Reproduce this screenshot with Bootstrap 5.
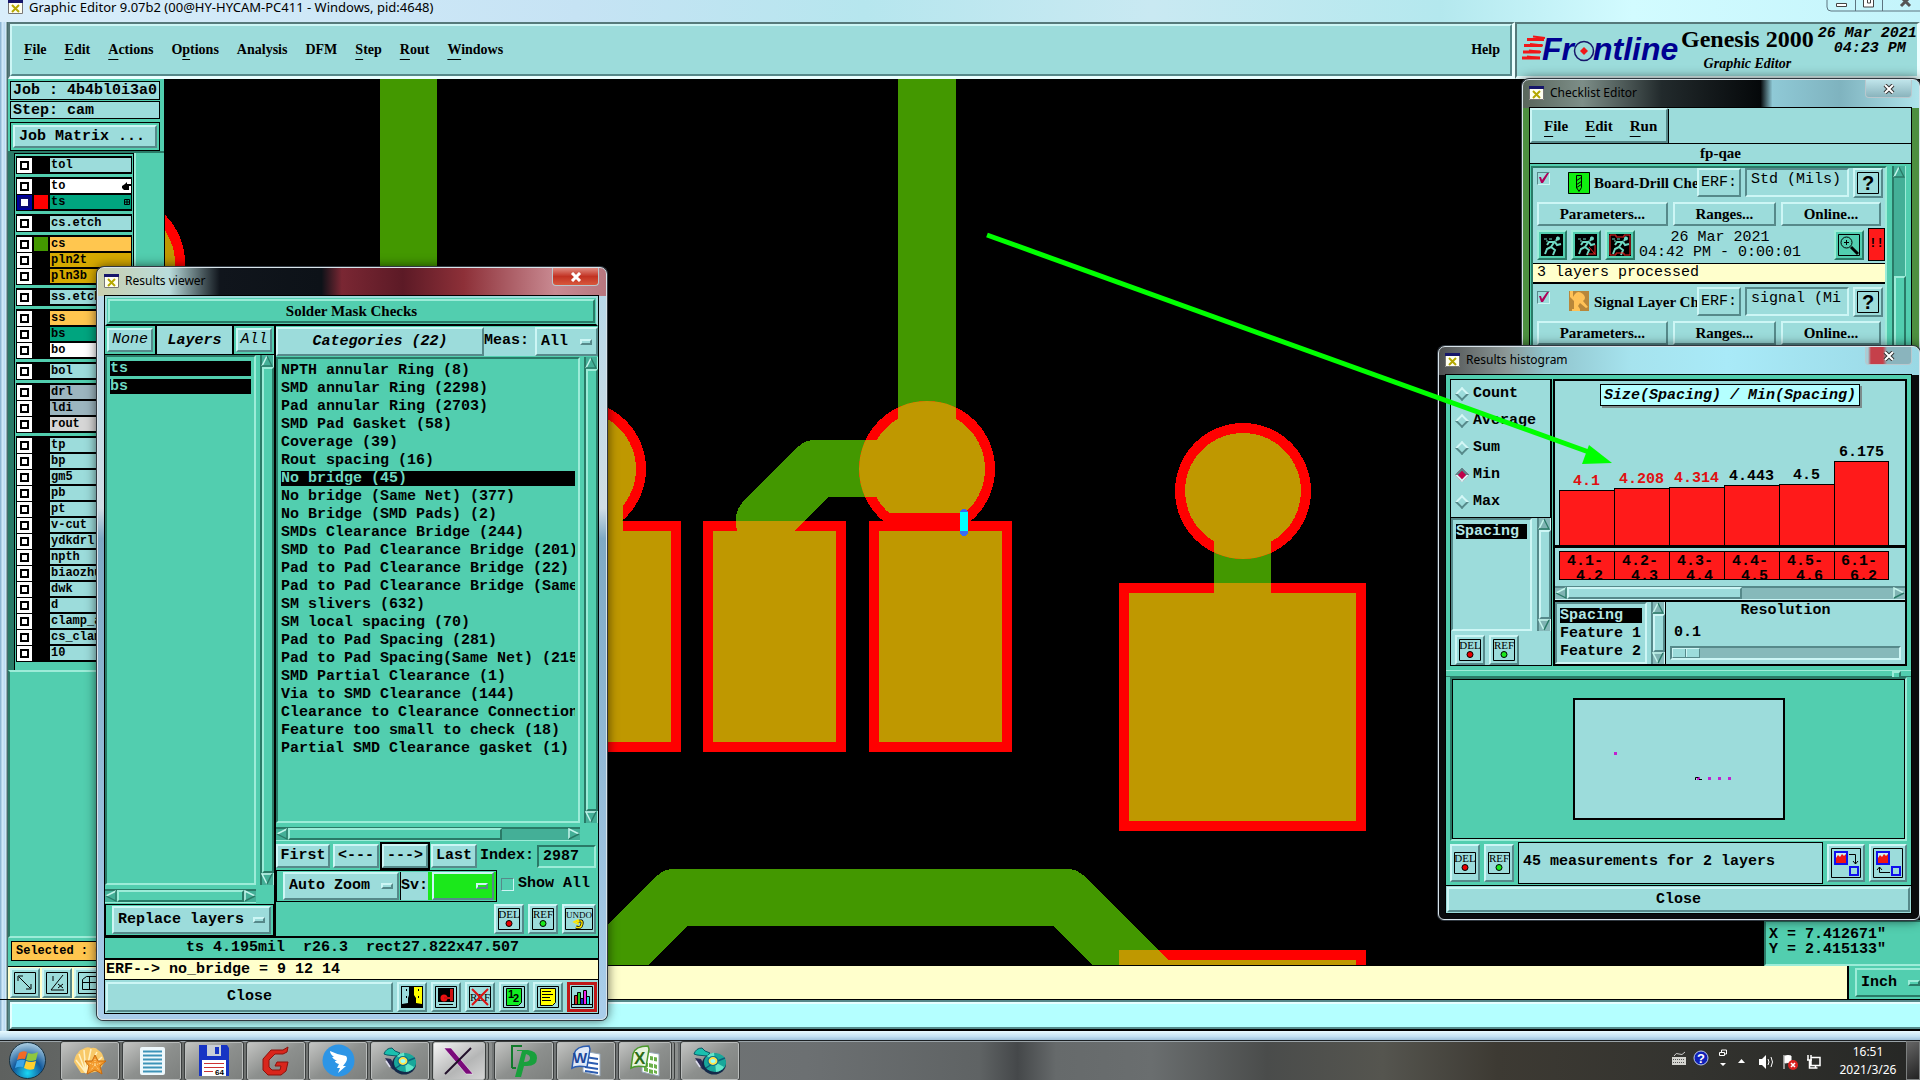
<!DOCTYPE html>
<html lang="en">
<head>
<meta charset="utf-8">
<meta name="viewport" content="width=device-width, initial-scale=1">
<title>Graphic Editor 9.07b2</title>
<link href="https://cdn.jsdelivr.net/npm/bootstrap@5.3.0/dist/css/bootstrap.min.css" rel="stylesheet">
<style>
:root{--cy:#9cdcdb;--cyl:#cdf6f5;--cyd:#56898a;--gr:#52ceaf;--grl:#9cecd8;--grd:#2a7a67;--cream:#ffffcc}
body{font-family:"Liberation Mono",monospace;font-weight:700;font-size:15px;line-height:18px;color:#000;height:100vh;overflow:hidden;background:#000}
button,select,input{font:inherit;color:inherit;border-radius:0}
button{padding:0;white-space:nowrap}
ul{list-style:none;margin:0;padding:0}
svg{display:block;flex:none}
.thin{font-weight:400}
.serif{font-family:"Liberation Serif",serif}
.ui{font-family:"Noto Sans",sans-serif;font-weight:400;font-size:12px}
.ui-lg{font-size:13px;line-height:15px}
.cy{background:var(--cy)} .gr{background:var(--gr)} .cream{background:var(--cream)}
.up{border:2px solid;border-color:var(--cyl) var(--cyd) var(--cyd) var(--cyl);background:var(--cy)}
.dn{border:2px solid;border-color:var(--cyd) var(--cyl) var(--cyl) var(--cyd);background:var(--cy)}
.gup{border:2px solid;border-color:var(--grl) var(--grd) var(--grd) var(--grl);background:var(--gr)}
.gdn{border:2px solid;border-color:var(--grd) var(--grl) var(--grl) var(--grd);background:var(--gr)}
.ln{border:1px solid #000}
.clip{overflow:hidden;white-space:nowrap;min-width:0}
.minh{min-height:0}
.gap-x{gap:5px}

/* option menus */
.drop select{appearance:none;border:0;background:transparent;padding:0;flex:1 1 0;min-width:0;outline:0}
.drop i{width:12px;height:6px;border:2px solid;border-color:var(--cyl) var(--cyd) var(--cyd) var(--cyl);flex:none}

/* scroll bars */
.vbar{width:14px;display:flex;flex-direction:column;flex:none;background:#86b9ba;box-shadow:inset 2px 0 var(--cyd),inset -1px 0 var(--cyl)}
.vbar b{flex:1;margin-left:2px;border:2px solid;border-color:var(--cyl) var(--cyd) var(--cyd) var(--cyl);background:var(--cy)}
.vbar b.late{margin-top:98px}
.hbar{height:14px;display:flex;align-items:center;flex:none;background:#86b9ba;box-shadow:inset 0 2px var(--cyd),inset 0 -1px var(--cyl)}
.hbar b{height:12px;border:2px solid;border-color:var(--cyl) var(--cyd) var(--cyd) var(--cyl);background:var(--cy)}
.hbar .part{width:214px}
.gbar{background:#44af97;--cyl:var(--grl);--cyd:var(--grd);--cy:var(--gr)}
.hbar.gbar{margin:4px 18px 1px 0}
.vbar svg,.hbar svg{color:#7fb3b3}.gbar svg{color:#44af97}

/* main shell */
.topline{height:22px;background:linear-gradient(90deg,#d9eefb,#c6e3f4 30%,#b6e6ee 45%,#c9e9f2 60%,#b4e8ee 75%,#d2fbff 85%,#c4f4fb);padding-left:8px;gap:6px}
.menus{height:57px}
.menus .bar{border:solid;border-width:2px 3px 3px 2px;border-color:#56797a #eaffff #eaffff #56797a}
.menus nav{border:2px solid;border-color:var(--cyl) var(--cyd) var(--cyd) var(--cyl);padding:0 10px 0 12px}
.mitems{gap:18px}
.brand{width:405px}
.pname{font-size:24px;line-height:30px}
.psub{font-size:14px;line-height:20px}
.pdate{line-height:15px;padding:2px 0 0 4px}
.mlink{color:#000;text-decoration:none;font-family:"Liberation Serif",serif;font-size:14px}
.klink{color:#000;text-decoration:none;font-family:"Liberation Serif",serif;font-size:15px}
.mlink u,.klink u{text-underline-offset:5px}
.frame-l{width:8px;background:linear-gradient(90deg,#8fb7d4 1px,#d4ebfa 2px,#b7d9f2 5px,#e8f7ff 6px,#476b6b 7px)}
.side{width:156px}
.jobbox{height:72px;gap:1px;padding:2px 4px 0 2px}
.jobbox>div{height:19px;padding-left:2px;line-height:17px}
.jobbox>.mx{height:29px;padding:2px;margin-top:2px}
.jobbox button{line-height:16px}
.lwrap{border-top:2px solid var(--grd);border-left:6px solid var(--grd)}
.lpane{border-left:2px solid var(--grl)}
.lowpane{height:268px;border:solid;border-width:2px 0 2px 2px;border-color:var(--grl) transparent var(--grl) var(--grd)}
.selbox{height:20px;font-size:12px;margin:3px 3px 5px 3px}
.layers{width:120px;border:1px solid #000;border-bottom:0;padding:2px 1px}
.layers ul{background:#000;padding:2px 1px 0 1px;margin-bottom:3px}
.layers li{display:flex;height:16px;align-items:flex-start;gap:2px}
.layers label{flex:1;height:14px;font-size:12px;line-height:15px;padding-left:1px;white-space:nowrap;overflow:hidden;display:flex;justify-content:space-between;align-items:center}
.layers input{appearance:none;width:15px;height:15px;margin:0;background:#fff;box-shadow:inset 0 0 0 3px #fff,inset 0 0 0 5px #000;flex:none}
.layers input:checked{box-shadow:inset 0 0 0 2px #0000a0,inset 0 0 0 4px #0a0a70}
.layers s{width:14px;height:14px;flex:none}
.s-r{background:red}.s-g{background:#439800}
.l-c{background:#9cdcdb}.l-w{background:#fff}.l-t{background:#00a57f}.l-o{background:#ffc64f}.l-g{background:#d6a900}.l-b{background:#9cb5bf}.l-r{background:#d6d6d6}
.board{background:#000}
.xy{width:156px;height:46px;line-height:15px;padding:5px 0 0 3px}
.msgrow{height:34px;border-bottom:1px solid #000}
.tools{border-top:1px solid #000;padding:1px 0 0 2px;gap:2px}
.unitbox{border-left:2px solid #000;width:73px;padding:2px 0 2px 6px;--cyl:var(--grl);--cyd:var(--grd)}
.prompt-a{height:31px;background:#b4ffff}
.prompt-b{border:solid;border-width:2px 0 2px 2px;border-color:#56898a #000 #000 #56898a}
.prompt-c{border:solid;border-width:2px 0 2px 2px;border-color:#e6ffff #56898a #56898a #e6ffff}
.frame-b{height:9px;background:linear-gradient(180deg,#e8faff,#c4e2f3 60%,#9fc3dc)}

/* floating windows */
.aero{position:absolute;border:1px solid #d9e4ea;border-radius:7px 7px 6px 6px;box-shadow:0 0 0 1px #303840,0 0 12px rgba(0,0,0,.7);display:flex;flex-direction:column;padding:0 7px 5px 6px}
.aero>.cap{height:27px;display:flex;align-items:center;gap:6px;flex:none;padding-bottom:2px}
.aero>.cap button{height:18px;width:47px;border:1px solid #b9c7cd;border-top:0;border-radius:0 0 4px 4px;align-self:flex-start;display:flex;justify-content:center;align-items:center}
.aero>.inside{border:1px solid #000;flex:1;display:flex;flex-direction:column;min-height:0}
.x-red{background:linear-gradient(#e08a80,#c23222 50%,#d8583c)}
.x-cy{background:linear-gradient(#bfe4ea,#8ab4bd)}
.x-mix{background:linear-gradient(90deg,#a6cdd5 2px,#c5404a 5px,#c5404a 17px,#8ab4bd 21px)}
#rv{left:97px;top:267px;width:510px;height:753px;background:linear-gradient(180deg,transparent 28px,#b8d8e8 28px,#d0dde4 32%,#7fa9c4 36%,#a9cdea 98%),linear-gradient(90deg,#c9cfae,#b9dcdc 14%,#10151c 24%,#0d1218 44%,#7a2733 48%,#5c1a26 60%,#8d3038 72%,#c98a92 90%,#b7777f)}
#ck{right:0;top:79px;width:398px;height:300px;background:linear-gradient(180deg,transparent 28px,#4d8f40 28px),linear-gradient(90deg,#59665c,#7d8e88 15%,#222a2c 35%,#05080a 60%,#8fc9d6 63%,#7fb3bf 80%,#aee3ea)}
#hg{right:0;top:346px;width:482px;height:574px;background:linear-gradient(180deg,transparent 28px,#090b0d 28px),linear-gradient(90deg,#4d4f50,#8b9796 14%,#8fc3cb 22%,#a6e3ee 40%,#a9eaf8 60%,#9ad8e4)}
.ib{width:30px;height:30px;display:flex;align-items:center;justify-content:center;flex:none}
.ib.tall{height:38px}.ib.big{width:38px;height:38px}.ib.wide{width:34px}
.tick{appearance:none;width:13px;height:13px;margin:0;border:1px solid;border-color:var(--cyd) var(--cyl) var(--cyl) var(--cyd);flex:none}
.tick:checked{background:url("data:image/svg+xml,%3Csvg xmlns='http://www.w3.org/2000/svg' viewBox='0 0 11 11'%3E%3Cpath d='M1 4l2 0 1 3 5-7 2 0-6 10-2 0z' fill='%23b0005a'/%3E%3C/svg%3E")}

/* results viewer */
.listing{padding:5px 4px 0 3px}
.listing.tight{padding:4px 3px 0}
.listing li{height:15px;line-height:16px;margin-bottom:3px;white-space:nowrap;overflow:hidden}
.listing li.on{background:#000;color:#6fd9c3}
.cy .listing li.on{color:#b4e6e5}
.rv-title{height:30px;border:2px solid var(--cy);border-bottom-color:#000;padding:1px}
.rv-title>div{line-height:20px}
.rv-cols{border-bottom:2px solid #000}
.rv-left{width:171px;border-right:2px solid #000}
.rv-lhead{height:29px;border-bottom:1px solid #000}
.rv-lhead div{padding:2px}
.rv-lhead .c1{width:50px}.rv-lhead .c3{width:40px}
.rv-lhead .c2{border:solid #000;border-width:0 2px;line-height:26px}
.rv-mode{border:1px solid #000;padding:1px 2px 1px 6px;height:32px}
.fill0{width:0}
.rv-rhead{height:31px;padding:1px 0}
.catb{width:208px}
.meas{line-height:28px;width:51px}
.nav-r{height:28px;gap:3px;padding-right:2px}
.nav-r button{width:46px;height:24px}
.nav-r .w54{width:54px}
.nav-r .deflt{outline:2px solid #000}
.nav-r input{height:23px}
.zoom-r{height:32px}
.zoombox{padding:1px 0 1px 6px;width:221px}
.zoombox .z1{width:116px}
.zoombox .z2{border-left:1px solid #000;margin-left:1px;width:28px;line-height:28px}
.lime,.lime .up{background:#1be81b}
.lime{padding-right:2px}
.del-r{height:34px;padding-right:2px}
.stat{height:20px;white-space:pre;line-height:20px;padding-left:81px}
.erf{height:22px;line-height:20px;border:solid #000;border-width:2px 0 1px;padding-left:1px}
.foot{height:33px;padding:2px 1px 1px;gap:4px}
.hot-i{border:3px solid #c01818;background:var(--cy)}

/* checklist editor */
.ck-menu{width:138px;height:35px;gap:17px;box-shadow:1px 1px #000;padding-left:12px}
.ck-name{height:21px;border:solid #000;border-width:1px 0}
.ck-body{padding:2px 1px 0 1px;gap:5px}
.ck-scroll{border:2px solid var(--grd);border-right-color:var(--grl)}
.ck-item{height:119px;padding-left:4px}
.ck-top{height:34px}
.ck-pic{width:22px;height:22px;margin:4px 0 0 18px}
.ck-lab{width:107px;padding:6px 0 0 4px}
.ck-erf{width:44px;height:29px}
.ck-in{width:104px;height:29px}
.ck-btns{height:24px}
.ck-run{height:37px;gap:4px}
.ck-date{line-height:15px}
.alarm{width:17px;height:33px;background:#ff1a1a;line-height:31px;border:1px solid #000;font-size:12px}
.ck-msg{height:21px;margin-left:-4px;border:solid #000;border-width:1px 0 2px;padding-left:4px}

/* histogram */
.hg-top{height:295px;padding:4px 4px 4px 4px;gap:1px}
.hg-left{width:102px}
.hg-agg{height:139px;border:solid #000;border-width:0 1px 1px 0}
.hg-flist{height:114px;gap:5px}
.hg-right{border-width:2px}
.hg-title{width:260px;height:22px;line-height:22px;background:#b4ffff;box-shadow:2px 2px #7c8c8c;margin-top:3px}
.radio-row{height:27px;display:flex;align-items:center;gap:6px}
.radio-row input{appearance:none;width:10px;height:10px;margin:0 0 0 2px;transform:rotate(45deg);border:2px solid;border-color:#d4f7f6 #56898a #56898a #d4f7f6;background:var(--cy);flex:none}
.radio-row input:checked{background:#c0004a;border-color:#56898a #d4f7f6 #d4f7f6 #56898a}
.plot{height:139px}
.colm{width:55px;text-align:center;line-height:17px}
.colm div{background:#ff1a1a;border:1px solid #000;border-width:1px 0 0 1px}
.colm:last-child div{border-right-width:1px}
.axis{height:3px;background:#000;margin-bottom:3px;flex:none}
.rngs{height:35px}
.rngs span{width:55px;height:29px;background:#ff1a1a;border:1px solid #000;border-width:1px 0 1px 1px;text-align:right;padding:2px 11px 0 0;line-height:15px;overflow:hidden}
.rngs span:last-child{border-right-width:1px}
.red{color:#e01010}
.hg-opts{border-top:2px solid #000}
.hg-opts ul{width:92px}
.hg-res{border-left:1px solid #000}
.slide{appearance:none;width:100%;height:14px;background:#86b9ba;border:2px solid;border-color:var(--cyd) var(--cyl) var(--cyl) var(--cyd);margin:4px 0 0;display:block}
.slide::-webkit-slider-thumb{appearance:none;width:28px;height:10px;border:1px solid;border-color:var(--cyl) var(--cyd) var(--cyd) var(--cyl);background:linear-gradient(90deg,var(--cy) 12px,var(--cyd) 12px 13px,var(--cyl) 13px 14px,var(--cy) 14px)}
.sash{height:7px;border-top:1px solid var(--grl);border-bottom:1px solid var(--grd);padding-right:10px}
.sash i{width:9px;height:8px}
.map{height:164px}
.hg-foot{height:44px}
.hg-msg{height:42px;line-height:38px}
.hg-close{border-top:1px solid #000;padding:1px}

/* task bar */
.tasks{height:40px;border-top:1px solid #1b1f22;box-shadow:inset 0 1px #9aa3a8;background:linear-gradient(90deg,#5e615f,#777a79 20%,#6c7072 42%,#5f6364 51%,#45484a 53%,#666a6b 55%,#6a6e6f 60%,#4a4c4b 66%,#55554f 72%,#3d3a33 78%,#33332f 88%,#262725);padding-left:9px}
.tasks .orb{margin-right:15px}
.tasks .tb{width:58px;height:38px;border:1px solid #b9bcbb;outline:1px solid #3b3e3e;border-radius:2px;background:linear-gradient(145deg,#c3c4c2,#8d908e 50%,#7d807e);margin-right:4px;display:flex;align-items:center;justify-content:center;flex:none}
.tasks .tb.hot{background:linear-gradient(145deg,#f4f4f4,#b5b6b6 60%,#d5d5d5)}
.tasks .tb.stack{width:52px;margin-right:10px;box-shadow:3px 0 #8b8e8d,4px 0 #3b3e3e,7px 0 #8b8e8d}
.tray{color:#fff}
.clock{width:76px}
.peek{width:14px;border:1px solid #7c7f7f;background:linear-gradient(145deg,#666,#222)}
.note{z-index:9}
</style>
</head>
<body class="d-flex flex-column">
<svg width="0" height="0" class="position-absolute">
<defs>
<symbol id="xw" viewBox="0 0 15 14"><path d="M0 0h15v14H0z" fill="#fffff0"/><path d="M.5.5h14v13H.5z" fill="none" stroke="#777"/><path d="M0 0h15v3H0z" fill="#16166a"/><path d="M4 5l7 7M11 5l-7 7" stroke="#b5a800" stroke-width="2"/></symbol>
<symbol id="au" viewBox="0 0 12 12"><path d="M6 1L11 11H1z" fill="currentColor"/><path d="M6 1L1 11" stroke="#c4f5ec" stroke-width="1.5"/><path d="M6 1l5 10H1" fill="none" stroke="#2a7a67" stroke-width="1.3"/></symbol>
<symbol id="ad" viewBox="0 0 12 12"><path d="M6 11L11 1H1z" fill="currentColor"/><path d="M11 1H1l5 10" fill="none" stroke="#c4f5ec" stroke-width="1.5"/><path d="M6 11l5-10" stroke="#2a7a67" stroke-width="1.5"/></symbol>
<symbol id="al" viewBox="0 0 12 12"><path d="M1 6L11 1V11z" fill="currentColor"/><path d="M1 6l10-5" stroke="#c4f5ec" stroke-width="1.5"/><path d="M11 1v10L1 6" fill="none" stroke="#2a7a67" stroke-width="1.3"/></symbol>
<symbol id="ar" viewBox="0 0 12 12"><path d="M11 6L1 1V11z" fill="currentColor"/><path d="M11 6L1 1v10" fill="none" stroke="#c4f5ec" stroke-width="1.5"/><path d="M1 11L11 6" stroke="#2a7a67" stroke-width="1.5"/></symbol>
<symbol id="del" viewBox="0 0 22 22"><path d="M.5.5h21v21H.5z" fill="none" stroke="#000"/><text x="11" y="10" font-family="Liberation Serif" font-size="11" font-weight="400" text-anchor="middle">DEL</text><circle cx="11" cy="15.500" r="3" fill="#e80000" stroke="#000"/></symbol>
<symbol id="ref" viewBox="0 0 22 22"><path d="M.5.5h21v21H.5z" fill="none" stroke="#000"/><text x="11" y="10" font-family="Liberation Serif" font-size="11" font-weight="400" text-anchor="middle">REF</text><circle cx="11" cy="15.500" r="3" fill="#1be81b" stroke="#000"/></symbol>
<symbol id="run" viewBox="0 0 22 22"><path d="M0 0h22v22H0z"/><g fill="none" stroke="#6fd9c3" stroke-width="2"><path d="M17 3l-2 4M14 7l-4 6 4 3-2 5M10 13l-4 2-2 5M13 8l-5 0-2 3M14 8l2 3 4-1"/></g><circle cx="17" cy="4.500" r="2" fill="#6fd9c3"/><path d="M3 5h3M8 5h3M5 7h2" stroke="#6fd9c3"/></symbol>
<symbol id="disc" viewBox="0 0 34 30"><path d="M1 8Q3 2 9 2l3 3 5 2-3 3-10-1z" fill="#19c0ae" stroke="#075a66"/><path d="M2 12l6 1 6 12-5-2z" fill="#2b2b55"/><path d="M3 15l4 6" stroke="#dde" stroke-width="1.5"/><ellipse cx="21" cy="18" rx="12" ry="10.500" fill="#142a4a"/><ellipse cx="22" cy="16.500" rx="11" ry="9.500" fill="#18a79a"/><path d="M22 16L14 10a11 9 0 0 1 7-3.500zM22 16l9 5a11 9 0 0 1-8 5z" fill="#62e6c8"/><path d="M22 16l10-4M22 16l-9 6" stroke="#0c5f78" stroke-width="1.5"/><ellipse cx="20" cy="15" rx="5.500" ry="5" fill="#0f6f8c"/><ellipse cx="20" cy="15" rx="3.500" ry="3" fill="#9ff" stroke="#ffe34a" stroke-width="1.800"/></symbol>
</defs>
</svg>

<header class="topline d-flex align-items-start flex-shrink-0">
  <svg width="15" height="14"><use href="#xw"/></svg>
  <span class="ui ui-lg flex-grow-1 clip">Graphic Editor 9.07b2 (00@HY-HYCAM-PC411 - Windows, pid:4648)</span>
  <svg width="94" height="13" viewBox="0 0 94 13" fill="none" stroke="#5d7480"><path d="M1 0v7q0 4 4 4h89M29.500 0v11M56.500 0v11"/><path d="M10.500 3.500h10v3h-10zM37.500-3v10h10V-3" fill="#fff" stroke="#444"/><path d="M41.500 0v3h3V0" stroke="#444"/><path d="M75-3l9 9M84-3l-9 9" stroke="#555" stroke-width="3"/></svg>
</header>

<div class="menus d-flex flex-shrink-0">
  <div class="frame-l flex-shrink-0"></div>
  <div class="bar cy flex-grow-1 d-flex">
    <nav class="flex-grow-1 d-flex align-items-center">
      <div class="mitems d-flex flex-grow-1">
        <a class="mlink" href="#"><u>F</u>ile</a><a class="mlink" href="#"><u>E</u>dit</a><a class="mlink" href="#"><u>A</u>ctions</a><a class="mlink" href="#">O<u>p</u>tions</a><a class="mlink" href="#">Analysis</a><a class="mlink" href="#">DFM</a><a class="mlink" href="#"><u>S</u>tep</a><a class="mlink" href="#"><u>R</u>out</a><a class="mlink" href="#"><u>W</u>indows</a>
      </div>
      <a class="mlink" href="#">Help</a>
    </nav>
  </div>
  <div class="bar brand cy d-flex clip flex-shrink-0">
    <svg width="164" height="52" viewBox="1516 25 164 52"><g stroke="#f01818" stroke-width="3"><path d="M1526 40.500h17M1523 46.500h18M1522 53h17M1521 59h18"/></g><path d="M1532 37.500l12 1.500M1529 45l13 1.500M1528 51.500l12 1.500M1526 57.500l13 1.500" stroke="#f01818" stroke-width="2"/><g font-family="Liberation Sans" font-size="32" font-style="italic" font-weight="700" fill="#000091"><text x="1541" y="61">Fr</text><text x="1592" y="61">ntline</text></g><circle cx="1583" cy="52" r="9.500" fill="none" stroke="#16166a" stroke-width="1.500"/><path d="M1583 48l4 4-4 4-4-4z" fill="#f01818"/></svg>
    <div class="serif text-center">
      <div class="pname">Genesis 2000</div>
      <div class="psub fst-italic">Graphic Editor</div>
    </div>
    <div class="pdate fst-italic flex-shrink-0"><div>26 Mar 2021</div><div class="ps-3">04:23 PM</div></div>
  </div>
</div>

<main class="d-flex flex-grow-1 minh position-relative">
  <div class="frame-l flex-shrink-0"></div>
  <aside class="side gr d-flex flex-column flex-shrink-0">
    <div class="jobbox d-flex flex-column">
      <div class="ln cy clip">Job : 4b4bl0i3a0</div>
      <div class="ln cy clip">Step: cam</div>
      <div class="ln mx"><button class="up w-100 h-100 text-start ps-1">Job Matrix ...</button></div>
    </div>
    <div class="lwrap flex-grow-1 d-flex minh">
      <div class="layers">
        <ul><li><input type="checkbox" id="y1"><s></s><label class="l-c" for="y1">tol</label></li></ul>
        <ul><li><input type="checkbox" id="y2"><s></s><label class="l-w" for="y2">to<svg width="9" height="9"><path d="M0 4l3-2 2-2v2h4v2H7v4H2L0 6z"/></svg></label></li>
        <li><input type="checkbox" id="y3" checked><s class="s-r"></s><label class="l-t" for="y3">ts<svg width="7" height="7"><path d="M.5.5h5v5h-5zM3 0v6M0 3h6" fill="none" stroke="#000"/></svg></label></li></ul>
        <ul><li><input type="checkbox" id="y4"><s></s><label class="l-c" for="y4">cs.etch</label></li></ul>
        <ul><li><input type="checkbox" id="y5"><s class="s-g"></s><label class="l-o" for="y5">cs</label></li>
        <li><input type="checkbox" id="y6"><s></s><label class="l-g" for="y6">pln2t</label></li>
        <li><input type="checkbox" id="y7"><s></s><label class="l-g" for="y7">pln3b</label></li></ul>
        <ul><li><input type="checkbox" id="y8"><s></s><label class="l-c" for="y8">ss.etch</label></li></ul>
        <ul><li><input type="checkbox" id="y9"><s></s><label class="l-o" for="y9">ss</label></li>
        <li><input type="checkbox" id="y10"><s></s><label class="l-t" for="y10">bs</label></li>
        <li><input type="checkbox" id="y11"><s></s><label class="l-w" for="y11">bo</label></li></ul>
        <ul><li><input type="checkbox" id="y12"><s></s><label class="l-c" for="y12">bol</label></li></ul>
        <ul><li><input type="checkbox" id="y13"><s></s><label class="l-b" for="y13">drl</label></li>
        <li><input type="checkbox" id="y14"><s></s><label class="l-b" for="y14">ldi</label></li>
        <li><input type="checkbox" id="y15"><s></s><label class="l-r" for="y15">rout</label></li></ul>
        <ul><li><input type="checkbox" id="y16"><s></s><label class="l-c" for="y16">tp</label></li>
        <li><input type="checkbox" id="y17"><s></s><label class="l-c" for="y17">bp</label></li>
        <li><input type="checkbox" id="y18"><s></s><label class="l-c" for="y18">gm5</label></li>
        <li><input type="checkbox" id="y19"><s></s><label class="l-c" for="y19">pb</label></li>
        <li><input type="checkbox" id="y20"><s></s><label class="l-c" for="y20">pt</label></li>
        <li><input type="checkbox" id="y21"><s></s><label class="l-c" for="y21">v-cut</label></li>
        <li><input type="checkbox" id="y22"><s></s><label class="l-c" for="y22">ydkdrl</label></li>
        <li><input type="checkbox" id="y23"><s></s><label class="l-c" for="y23">npth</label></li>
        <li><input type="checkbox" id="y24"><s></s><label class="l-c" for="y24">biaozhu</label></li>
        <li><input type="checkbox" id="y25"><s></s><label class="l-c" for="y25">dwk</label></li>
        <li><input type="checkbox" id="y26"><s></s><label class="l-c" for="y26">d</label></li>
        <li><input type="checkbox" id="y27"><s></s><label class="l-c" for="y27">clamp_a</label></li>
        <li><input type="checkbox" id="y28"><s></s><label class="l-c" for="y28">cs_clam</label></li>
        <li><input type="checkbox" id="y29"><s></s><label class="l-c" for="y29">10</label></li></ul>
      </div>
      <div class="lpane flex-grow-1"></div>
    </div>
    <div class="lowpane"></div>
    <div class="selbox ln l-o px-1 clip">Selected : 0</div>
  </aside>
  <div class="flex-grow-1 position-relative minh overflow-hidden">
    <svg class="board" width="100%" height="100%" viewBox="164 79 1756 887" preserveAspectRatio="xMinYMin slice" shape-rendering="crispEdges">
      <defs>
        <g id="mask"><circle cx="117" cy="263" r="68"/><circle cx="578" cy="469" r="68"/><circle cx="927" cy="469" r="68"/><circle cx="1243" cy="491" r="68"/><path d="M540 521h141v231H540zM703 521h143v231H703zM869 521h143v231H869zM1119 583h247v248h-247zM1119 950h247v40h-247z"/></g>
        <clipPath id="mc"><circle cx="117" cy="263" r="68"/><circle cx="578" cy="469" r="68"/><circle cx="927" cy="469" r="68"/><circle cx="1243" cy="491" r="68"/><path d="M540 521h141v231H540zM703 521h143v231H703zM869 521h143v231H869zM1119 583h247v248h-247zM1119 950h247v40h-247z"/></clipPath>
        <clipPath id="cut"><path d="M800 300h200v213H800z"/></clipPath>
        <g id="cu"><circle cx="117" cy="263" r="58"/><circle cx="578" cy="469" r="58"/><circle cx="1243" cy="491" r="58"/><circle cx="927" cy="469" r="58" clip-path="url(#cut)"/><path d="M380 79h57v300h-57zM898 79h58v390h-58zM565 469h58v70h-58zM1214 500h57v100h-57zM550 531h121v211H550zM713 531h123v211H713zM879 531h123v211H879zM1129 593h227v228h-227zM1129 960h227v40h-227z"/></g>
        <g id="tr" fill="none" stroke-width="57" stroke-linejoin="round" stroke-linecap="round"><path d="M905 468h-88l-53 53"/><path d="M540 1033l136-136h389l130 130"/></g>
      </defs>
      <use href="#cu" fill="#439800"/><use href="#tr" stroke="#439800"/>
      <use href="#mask" fill="red"/>
      <g clip-path="url(#mc)"><use href="#cu" fill="#bf9800"/><use href="#tr" stroke="#bf9800"/></g>
      <rect x="960" y="509" width="8" height="27" rx="4" fill="#3a6cf0"/><path d="M960 512h8v19h-8z" fill="#00ffff"/>
      <path d="M164 79h1v887h-1zM164 964.500h1756v2H164z" fill="#000"/>
    </svg>
    <div class="xy gdn position-absolute end-0 bottom-0 border-end-0"><div>X = 7.412671"</div><div>Y = 2.415133"</div></div>
  </div>
</main>

<div class="msgrow d-flex flex-shrink-0 cream">
  <div class="frame-l flex-shrink-0"></div>
  <div class="tools d-flex">
    <button class="up cream ib" aria-label="Zoom"><svg width="22" height="22" fill="none" stroke="#000"><path d="M.5.5h21v21H.5zM5 5l11 11M4 9V4h5M17 12v5h-5"/></svg></button>
    <button class="up cream ib" aria-label="Measure"><svg width="22" height="22" fill="none" stroke="#000"><path d="M.5.5h21v21H.5zM17 3L5 18h13M7 4v5M12 12l5 4M12 16l5-4"/></svg></button>
    <button class="up gr ib" aria-label="Grid"><svg width="22" height="22" fill="none" stroke="#000"><path d="M.5.5h21v21H.5zM4.500 17.500v-10l4-3h10v13zM4 10.500h14M11.500 4v14"/></svg></button>
  </div>
  <div class="flex-grow-1"></div>
  <div class="unitbox gr">
    <label class="drop gup d-flex align-items-center h-100 ps-1 border-end-0"><select aria-label="Units"><option>Inch</option></select><i></i></label>
  </div>
</div>
<div class="prompt-a d-flex flex-shrink-0">
  <div class="frame-l flex-shrink-0"></div>
  <div class="prompt-b flex-grow-1"><div class="prompt-c h-100"></div></div>
</div>
<div class="frame-b flex-shrink-0"></div>

<footer class="tasks d-flex align-items-center flex-shrink-0">
  <button class="orb border-0 bg-transparent" aria-label="Start"><svg width="37" height="37" viewBox="0 0 37 37"><defs><radialGradient id="orb" cx=".5" cy=".85" r=".8"><stop offset="0" stop-color="#19d8f5"/><stop offset=".5" stop-color="#12599b"/><stop offset="1" stop-color="#9fc4dc"/></radialGradient></defs><circle cx="18.500" cy="18.500" r="18" fill="url(#orb)" stroke="#17303f"/><path d="M10 11q4-3 8-1l-2 7q-4-1-8 1z" fill="#f26a25"/><path d="M19 11q5 2 10-1l-2 8q-5 2-10 0z" fill="#8fc73e"/><path d="M8 19q4-2 8-1l-2 7q-4-1-8 1z" fill="#3ba5e8"/><path d="M17 19q5 2 10 0l-2 8q-5 2-10-1z" fill="#ffd02e"/></svg></button>
  <button class="tb" aria-label="Shell"><svg width="32" height="28" viewBox="0 0 32 28"><path d="M7 26L0 15Q1 8 4 6q1-3 5-4 4-3 8-1 5-1 7 2 4 2 5 6 2 4 1 7l-5 8-9 2z" fill="#f8c968"/><path d="M12 26L2 13M12 26L5 7M12 26L10 3M12 26L17 2M12 26L23 5M12 26L28 10" stroke="#fff0c0" stroke-width="1.500"/><path d="M21 8l3 6 8 0-6 5 2 8-7-4-8 4 2-8-4-5h7z" fill="#f39a2d" stroke="#c96a0a"/><path d="M21 12v6l6-2M21 18l4 5M21 18l-4 5M21 18l-6-2" stroke="#ffdf9a" stroke-dasharray="1 1" fill="none"/></svg></button>
  <button class="tb" aria-label="Notes"><svg width="25" height="28"><rect width="25" height="28" rx="2" fill="#eef8fc"/><path d="M3 4.500h19M3 8.500h19M3 12.500h19M3 16.500h19M3 20.500h19M3 24.500h19" stroke="#3d93b8" stroke-width="2"/></svg></button>
  <button class="tb" aria-label="Save tool"><svg width="30" height="31" viewBox="0 0 30 31"><path d="M0 0h28l2 3v28H0z" fill="#1734c4"/><path d="M8 0h14v11H8z" fill="#c9ced6"/><path d="M16 2h4v7h-4z" fill="#1734c4"/><path d="M3 15h24v16H3z" fill="#fff"/><path d="M5 18.500h20M5 22.500h20M5 26.500h9" stroke="#c33"/><text x="16" y="30" font-family="Liberation Sans" font-size="8">64</text></svg></button>
  <button class="tb" aria-label="Genesis"><svg width="28" height="30" viewBox="0 0 28 30"><path d="M26 1l-1 5-4 2h-8l-6 6v7l3 3h8l1-4h-6l2-4h11l-2 9-5 4H6l-5-5V13l8-9h12z" fill="#d9261c" stroke="#8d120c"/></svg></button>
  <button class="tb" aria-label="Messenger"><svg width="33" height="33" viewBox="0 0 33 33"><circle cx="16.500" cy="16.500" r="16" fill="#2d95e6"/><path d="M8 7q8 4 16 5 2 2 0 6l-3 4h3l-8 7 2-5h-3l2-4q-4-1-4-3l2 0q-4-2-5-4h2q-4-3-4-6z" fill="#fff"/></svg></button>
  <button class="tb" aria-label="CAM"><svg width="34" height="30"><use href="#disc"/></svg></button>
  <button class="tb hot stack" aria-label="X server"><svg width="32" height="28" viewBox="0 0 32 28"><path d="M1 1h7l22 26h-7z" fill="#7a0a7a" stroke="#fff" stroke-width=".5"/><path d="M28 1L2 27" stroke="#22102a" stroke-width="2"/></svg></button>
  <button class="tb" aria-label="Planner"><svg width="30" height="34" viewBox="0 0 30 34"><path d="M8 6h11q9 1 9 8 0 8-10 8h-3l-3 11H6l3-11 4-15h-5z" fill="#18a03c"/><path d="M17 10l-2 8q6 0 6-4 0-3-4-4z" fill="#8d908e"/><path d="M13 2H3v22M3 24h4" fill="none" stroke="#127a2c" stroke-width="2"/></svg></button>
  <button class="tb" aria-label="Word"><svg width="30" height="32" viewBox="0 0 30 32"><path d="M12 6l17 3v22l-17-4z" fill="#fff" stroke="#9ab"/><path d="M14 12l13 2M14 17l13 2M14 22l13 2M14 26l13 2" stroke="#2b5cb0" stroke-width="2"/><path d="M18 1Q5 1 3 9L1 23q5-3 15-1l3-18z" fill="#dfe9f7" stroke="#2b5cb0" stroke-width="1.500"/><text x="2" y="18" font-family="Liberation Sans" font-size="15" font-weight="700" fill="#1d479a">W</text></svg></button>
  <button class="tb stack" aria-label="Excel"><svg width="30" height="32" viewBox="0 0 30 32"><path d="M12 6l17 3v22l-17-4z" fill="#fff" stroke="#9ab"/><path d="M20 11l3 .500v4l-3-.500zM24 12l3 .500v4l-3-.500zM14 17l4 1v4l-4-1zM19 18l4 1v4l-4-1zM24 19l3 1v4l-3-1zM14 22l4 1v4l-4-1zM19 24l4 1v4l-4-1zM24 25l3 1v3l-3-1z" fill="#6bb04a"/><path d="M18 1Q5 1 3 9L1 23q5-3 15-1l3-18z" fill="#e5f3dc" stroke="#4b9a2d" stroke-width="1.500"/><text x="4" y="19" font-family="Liberation Sans" font-size="17" font-weight="700" fill="#2c6b16">X</text></svg></button>
  <button class="tb" aria-label="CAM viewer"><svg width="34" height="30"><use href="#disc"/></svg></button>
  <div class="tray d-flex align-items-center ms-auto h-100">
    <svg width="160" height="38" viewBox="1670 1041 160 38"><path d="M1672 1056h14v8h-14z" fill="#d5d5d0"/><path d="M1673 1058.500h12M1673 1061.500h12" stroke="#555" stroke-dasharray="1 1"/><path d="M1674 1055q2-4 5-2t6-2" fill="none" stroke="#ccc"/><circle cx="1701" cy="1057" r="7" fill="#1020b8" stroke="#b8c6e8"/><text x="1701" y="1062" font-family="Liberation Sans" font-weight="700" font-size="13" fill="#fff" text-anchor="middle">?</text><path d="M1719.500 1051.500h5v3h-5zM1721.500 1051v-2h5v4h-2" fill="none" stroke="#fff"/><path d="M1720 1062h6l-3 3zM1738 1062h7l-3.500-4z" fill="#fff"/><path d="M1759 1058h3l4-4v14l-4-4h-3z" fill="#fff"/><path d="M1768 1058q2 3 0 6M1771 1056q3 5 0 10" fill="none" stroke="#fff"/><path d="M1784 1054v14M1785 1055q3-1 6 0v7q-3-1-6 0z" fill="#fff" stroke="#fff"/><circle cx="1793" cy="1064" r="5" fill="#d92020"/><path d="M1791 1062l4 4M1795 1062l-4 4" stroke="#fff" stroke-width="1.500"/><path d="M1811 1056.500h9v8h-9zM1808 1054v5M1811 1054v3M1807 1059h5M1809.500 1059v8h8M1815.500 1065v2" fill="none" stroke="#fff" stroke-width="1.500"/></svg>
    <div class="clock ui text-center"><div>16:51</div><div>2021/3/26</div></div>
    <div class="peek h-100"></div>
  </div>
</footer>

<!-- Checklist editor -->
<section class="aero" id="ck">
  <div class="cap"><svg width="15" height="14"><use href="#xw"/></svg><span class="ui flex-grow-1">Checklist Editor</span><button class="x-cy" aria-label="Close window"><svg width="12" height="10"><path d="M2 1l8 8M10 1L2 9" stroke="#333" stroke-width="4"/><path d="M2 1l8 8M10 1L2 9" stroke="#fff" stroke-width="2"/></svg></button></div>
  <div class="inside cy">
    <nav class="ck-menu up d-flex align-items-center flex-shrink-0"><a class="klink" href="#"><u>F</u>ile</a><a class="klink" href="#"><u>E</u>dit</a><a class="klink" href="#"><u>R</u>un</a></nav>
    <div class="ck-name serif text-center flex-shrink-0">fp-qae</div>
    <div class="ck-body d-flex flex-grow-1 gr clip">
      <div class="ck-scroll flex-grow-1 fill0">
        <div class="ck-item cy">
          <div class="ck-top d-flex align-items-start">
            <input type="checkbox" class="tick mt-1" aria-label="Board-Drill Checks" checked>
            <svg class="ck-pic"><path d="M0 0h22v22H0z" fill="#10ee10"/><path d="M.5.5h21v21H.5zM8.500 3.500h5v12l-2.500 4-2.500-4zM8 9l6-4M8 13l6-4M8 16l6-4" fill="none" stroke="#000"/></svg>
            <div class="ck-lab serif clip">Board-Drill Che</div>
            <button class="ck-erf up thin">ERF:</button>
            <input class="ck-in dn thin ms-1 px-1 pb-2" value="Std (Mils)" aria-label="ERF model">
            <button class="up ib ms-1" aria-label="Help"><svg width="22" height="22"><path d="M.5.5h21v21H.5z" fill="none" stroke="#000"/><text x="11" y="18" text-anchor="middle" font-family="Liberation Sans" font-size="20" font-weight="700">?</text></svg></button>
          </div>
          <div class="ck-btns d-flex serif gap-x pe-1"><button class="up flex-fill">Parameters...</button><button class="up flex-fill">Ranges...</button><button class="up flex-fill">Online...</button></div>
          <div class="ck-run d-flex align-items-center">
            <button class="gup ib" aria-label="Run"><svg width="22" height="22"><use href="#run"/></svg></button>
            <button class="gup ib" aria-label="Run local"><svg width="22" height="22"><use href="#run"/><path d="M13 20h8M14 13l6 7M20 11v8" stroke="#e22"/></svg></button>
            <button class="gup ib" aria-label="Run profile"><svg width="22" height="22"><use href="#run"/><path d="M1 1h6v2h8V1h6v20h-6v-2H7v2H1z" fill="none" stroke="#e22"/></svg></button>
            <div class="ck-date thin text-center"><div>26 Mar 2021</div><div>04:42 PM - 0:00:01</div></div>
            <button class="gup ib ms-auto" aria-label="View results"><svg width="22" height="22" fill="none" stroke="#000"><path d="M.5.5h21v21H.5z"/><circle cx="8.500" cy="8.500" r="5.500"/><path d="M6 8.500h5M8.500 6v5"/><path d="M13 13l7 7" stroke-width="3"/></svg></button>
            <div class="alarm text-center">!!</div>
          </div>
          <div class="ck-msg cream thin">3 layers processed</div>
        </div>
        <div class="ck-item cy">
          <div class="ck-top d-flex align-items-start">
            <input type="checkbox" class="tick mt-1" aria-label="Signal Layer Checks" checked>
            <svg class="ck-pic"><path d="M1 0h20v20H1z" fill="#b8873a"/><path d="M2 0v6l4 4v8h-2v2h8v-2l-2-3 2-3 6 5 2-1-5-6q4-3 0-7-5-4-8 0-3 3 0 6L7 8 5 5V0z" fill="#ffc257"/></svg>
            <div class="ck-lab serif clip">Signal Layer Ch</div>
            <button class="ck-erf up thin">ERF:</button>
            <input class="ck-in dn thin ms-1 px-1 pb-2" value="signal (Mi" aria-label="ERF model">
            <button class="up ib ms-1" aria-label="Help"><svg width="22" height="22"><path d="M.5.5h21v21H.5z" fill="none" stroke="#000"/><text x="11" y="18" text-anchor="middle" font-family="Liberation Sans" font-size="20" font-weight="700">?</text></svg></button>
          </div>
          <div class="ck-btns d-flex serif gap-x pe-1"><button class="up flex-fill">Parameters...</button><button class="up flex-fill">Ranges...</button><button class="up flex-fill">Online...</button></div>
        </div>
      </div>
      <div class="vbar gbar me-1"><svg width="14" height="12"><use href="#au"/></svg><b class="late"></b></div>
    </div>
  </div>
</section>

<!-- Results histogram -->
<section class="aero" id="hg">
  <div class="cap"><svg width="15" height="14"><use href="#xw"/></svg><span class="ui flex-grow-1">Results histogram</span><button class="x-mix" aria-label="Close window"><svg width="12" height="10"><path d="M2 1l8 8M10 1L2 9" stroke="#333" stroke-width="4"/><path d="M2 1l8 8M10 1L2 9" stroke="#fff" stroke-width="2"/></svg></button></div>
  <div class="inside gr">
    <div class="hg-top d-flex">
      <div class="hg-left cy ln d-flex flex-column">
        <div class="hg-agg ps-1">
          <div class="radio-row"><input type="radio" name="agg" id="r1"><label for="r1">Count</label></div>
          <div class="radio-row"><input type="radio" name="agg" id="r2"><label for="r2">Average</label></div>
          <div class="radio-row"><input type="radio" name="agg" id="r3"><label for="r3">Sum</label></div>
          <div class="radio-row"><input type="radio" name="agg" id="r4" checked><label for="r4">Min</label></div>
          <div class="radio-row"><input type="radio" name="agg" id="r5"><label for="r5">Max</label></div>
        </div>
        <div class="hg-flist d-flex"><ul class="dn listing tight flex-grow-1 minh"><li class="on">Spacing</li></ul><div class="vbar"><svg width="14" height="12"><use href="#au"/></svg><b></b><svg width="14" height="12"><use href="#ad"/></svg></div></div>
        <div class="d-flex gap-1 pt-1 ps-1"><button class="up ib" aria-label="Delete"><svg width="22" height="22"><use href="#del"/></svg></button><button class="up ib" aria-label="Refresh"><svg width="22" height="22"><use href="#ref"/></svg></button></div>
      </div>
      <div class="hg-right cy ln d-flex flex-column flex-grow-1">
        <div class="hg-title fst-italic text-center mx-auto ln">Size(Spacing) / Min(Spacing)</div>
        <div class="plot d-flex align-items-end ps-1">
          <div class="colm red">4.1<div style="height:55px"></div></div><div class="colm red">4.208<div style="height:57px"></div></div><div class="colm red">4.314<div style="height:58px"></div></div><div class="colm">4.443<div style="height:60px"></div></div><div class="colm">4.5<div style="height:61px"></div></div><div class="colm">6.175<div style="height:84px"></div></div>
        </div>
        <div class="axis"></div>
        <div class="rngs d-flex ps-1"><span>4.1-<br>4.2</span><span>4.2-<br>4.3</span><span>4.3-<br>4.4</span><span>4.4-<br>4.5</span><span>4.5-<br>4.6</span><span>6.1-<br>6.2</span></div>
        <div class="hbar"><svg width="12" height="12"><use href="#al"/></svg><b class="w-50"></b><svg width="12" height="12" class="ms-auto"><use href="#ar"/></svg></div>
        <div class="hg-opts d-flex flex-grow-1 minh">
          <ul class="dn listing tight"><li class="on">Spacing</li><li>Feature 1</li><li>Feature 2</li></ul>
          <div class="vbar ms-1"><svg width="14" height="12"><use href="#au"/></svg><b></b><svg width="14" height="12"><use href="#ad"/></svg></div>
          <div class="hg-res flex-grow-1 px-1 d-flex flex-column"><label class="text-center" for="reso">Resolution</label><span class="ps-1 mt-1">0.1</span><input type="range" id="reso" class="slide" value="0"></div>
        </div>
      </div>
    </div>
    <div class="sash d-flex justify-content-end"><i class="gup"></i></div>
    <div class="map gdn mx-1">
      <div class="ln w-100 h-100 d-flex align-items-center justify-content-center"><svg width="212" height="122"><path d="M1 1h210v120H1z" fill="#9cdcdb" stroke="#000" stroke-width="2"/><path d="M41 54h3v3h-3zM124 79h3v3h-3zM135 79h3v3h-3zM145 79h3v3h-3zM155 79h3v3h-3z" fill="#c020d0"/><path d="M122.500 82v-2.500h3M126 81.500h3" fill="none" stroke="#000"/></svg></div>
    </div>
    <div class="hg-foot d-flex px-1 gap-1 align-items-center">
      <button class="up ib tall" aria-label="Delete"><svg width="22" height="22"><use href="#del"/></svg></button><button class="up ib tall" aria-label="Refresh"><svg width="22" height="22"><use href="#ref"/></svg></button>
      <div class="hg-msg ln cy flex-grow-1 ps-1 clip">45 measurements for 2 layers</div>
      <button class="up ib big" aria-label="Load"><svg width="30" height="30" fill="none"><path d="M.5.5h29v29H.5z" stroke="#000"/><path d="M4 4h12v12H4z" fill="#cfeef0" stroke="#1010ee" stroke-width="2"/><path d="M5 15V10l2-3 2 2 2-3 2 2 2-2v9z" fill="#ee1515"/><path d="M19 19h8v8h-8z" stroke="#1010ee" stroke-width="2"/><path d="M18 6.500h6.500V16M22 13l2.500 3 2.500-3" stroke="#000"/></svg></button>
      <button class="up ib big" aria-label="Store"><svg width="30" height="30" fill="none"><path d="M.5.5h29v29H.5z" stroke="#000"/><path d="M4 4h12v12H4z" fill="#cfeef0" stroke="#1010ee" stroke-width="2"/><path d="M5 15V10l2-3 2 2 2-3 2 2 2-2v9z" fill="#ee1515"/><path d="M19 19h8v8h-8z" stroke="#1010ee" stroke-width="2"/><path d="M17 24.500H6.500V19M4 22l2.500-3L9 22" stroke="#000"/></svg></button>
    </div>
    <div class="hg-close cy flex-grow-1 d-flex"><button class="up w-100">Close</button></div>
  </div>
</section>

<!-- Results viewer -->
<section class="aero" id="rv">
  <div class="cap"><svg width="15" height="14"><use href="#xw"/></svg><span class="ui flex-grow-1">Results viewer</span><button class="x-red" aria-label="Close window"><svg width="12" height="10"><path d="M2 1l8 8M10 1L2 9" stroke="#fff" stroke-width="3"/></svg></button></div>
  <div class="inside gr">
    <div class="rv-title serif text-center flex-shrink-0"><div class="gup h-100">Solder Mask Checks</div></div>
    <div class="rv-cols d-flex flex-grow-1 minh">
      <div class="rv-left d-flex flex-column">
        <div class="rv-lhead d-flex">
          <div class="c1"><button class="up w-100 h-100 thin fst-italic">None</button></div>
          <div class="c2 cy fst-italic text-center flex-grow-1">Layers</div>
          <div class="c3"><button class="up w-100 h-100 thin fst-italic">All</button></div>
        </div>
        <div class="d-flex flex-grow-1 minh"><ul class="gdn listing tight flex-grow-1"><li class="on">ts</li><li class="on">bs</li></ul><div class="vbar gbar ms-1"><svg width="14" height="12"><use href="#au"/></svg><b></b><svg width="14" height="12"><use href="#ad"/></svg></div></div>
        <div class="hbar gbar"><svg width="12" height="12"><use href="#al"/></svg><b class="flex-grow-1"></b><svg width="12" height="12"><use href="#ar"/></svg></div>
        <div class="rv-mode"><label class="drop up d-flex align-items-center h-100 px-1"><select aria-label="Layer mode"><option>Replace layers</option></select><i></i></label></div>
      </div>
      <div class="d-flex flex-column flex-grow-1 minh fill0">
        <div class="rv-rhead d-flex">
          <button class="catb up fst-italic flex-shrink-0">Categories (22)</button>
          <label class="meas cy clip" for="meas">Meas:</label>
          <div class="drop up d-flex align-items-center flex-grow-1 px-1"><select id="meas"><option>All</option></select><i></i></div>
        </div>
        <div class="d-flex flex-grow-1 minh"><ul class="gdn listing tight flex-grow-1 clip fill0"><li>NPTH annular Ring (8)</li><li>SMD annular Ring (2298)</li><li>Pad annular Ring (2703)</li><li>SMD Pad Gasket (58)</li><li>Coverage (39)</li><li>Rout spacing (16)</li><li class="on">No bridge (45)</li><li>No bridge (Same Net) (377)</li><li>No Bridge (SMD Pads) (2)</li><li>SMDs Clearance Bridge (244)</li><li>SMD to Pad Clearance Bridge (201)</li><li>Pad to Pad Clearance Bridge (22)</li><li>Pad to Pad Clearance Bridge (Same</li><li>SM slivers (632)</li><li>SM local spacing (70)</li><li>Pad to Pad Spacing (281)</li><li>Pad to Pad Spacing(Same Net) (215</li><li>SMD Partial Clearance (1)</li><li>Via to SMD Clearance (144)</li><li>Clearance to Clearance Connection</li><li>Feature too small to check (18)</li><li>Partial SMD Clearance gasket (1)</li></ul><div class="vbar gbar ms-1"><svg width="14" height="12"><use href="#au"/></svg><b></b><svg width="14" height="12"><use href="#ad"/></svg></div></div>
        <div class="hbar gbar"><svg width="12" height="12"><use href="#al"/></svg><b class="part"></b><svg width="12" height="12" class="ms-auto"><use href="#ar"/></svg></div>
        <div class="nav-r d-flex align-items-center">
          <button class="up w54">First</button><button class="up">&lt;---</button><button class="up deflt">---&gt;</button><button class="up">Last</button>
          <label for="idx">Index:</label><input id="idx" class="gdn flex-grow-1 px-1 fill0" value="2987">
        </div>
        <div class="zoom-r d-flex align-items-center">
          <div class="zoombox ln h-100 d-flex"><label class="z1 drop up d-flex align-items-center px-1"><select aria-label="Zoom mode"><option>Auto Zoom</option></select><i></i></label><label class="z2 cy" for="sv">Sv:</label><div class="lime flex-grow-1 d-flex ps-1"><div class="drop up d-flex flex-grow-1 align-items-center px-1"><select id="sv"><option> </option></select><i></i></div></div></div>
          <div class="ms-1 d-flex align-items-center gap-1 pb-1"><input type="checkbox" class="tick" id="sa"><label for="sa">Show All</label></div>
        </div>
        <div class="del-r d-flex justify-content-end align-items-center gap-1"><button class="up ib" aria-label="Delete"><svg width="22" height="22"><use href="#del"/></svg></button><button class="up ib" aria-label="Refresh"><svg width="22" height="22"><use href="#ref"/></svg></button><button class="up ib wide" aria-label="Undo"><svg width="28" height="22"><path d="M.5.5h27v21H.5z" fill="none" stroke="#000"/><text x="14" y="10" text-anchor="middle" font-family="Liberation Serif" font-size="9" font-weight="400">UNDO</text><path d="M12 14q6-3 5 2t-6 3" fill="none" stroke="#000" stroke-width="3"/><path d="M12 14q6-3 5 2t-6 3M9 14l4-2v4z" fill="none" stroke="#ffe800" stroke-width="1.500"/></svg></button></div>
      </div>
    </div>
    <div class="stat clip flex-shrink-0">ts 4.195mil  r26.3  rect27.822x47.507</div>
    <div class="erf cream clip flex-shrink-0">ERF--&gt; no_bridge = 9 12 14</div>
    <div class="foot cy d-flex flex-shrink-0">
      <button class="up flex-grow-1">Close</button>
      <button class="up ib" aria-label="Faces"><svg width="22" height="22"><path d="M0 0h22v22H0z"/><path d="M1 1h7v8l-1 3v5l-6 1z" fill="#9cdcdb"/><path d="M13 1h8v17l-6-1v-5l-2-3z" fill="#ff0"/><path d="M5 4h1M17 4h1M5 11h1M17 11h1" stroke="#000" stroke-width="2"/></svg></button>
      <button class="up ib" aria-label="Probe"><svg width="22" height="22"><path d="M.5.5h21v21H.5z" fill="none" stroke="#000"/><path d="M3 2h16v14H3z"/><circle cx="9" cy="12" r="3.500" fill="#e11"/><path d="M15 3h3v12h-3zM9 11h8v2H9z" fill="#c11"/><path d="M4 18.500h14" stroke="#000"/></svg></button>
      <button class="up ib" aria-label="No reference"><svg width="22" height="22"><path d="M.5.5h21v21H.5z" fill="none" stroke="#000"/><text x="11" y="15" text-anchor="middle" font-family="Liberation Serif" font-size="11" font-weight="400">REF</text><path d="M3 3l16 16M19 3L3 19" stroke="#d11" stroke-width="2"/></svg></button>
      <button class="up ib" aria-label="Numbering"><svg width="22" height="22"><path d="M.5.5h21v21H.5z" fill="none" stroke="#000"/><path d="M3.500 2.500h15v14l-3 3h-12z" fill="#1e2" stroke="#000"/><text x="8" y="12" text-anchor="middle" font-family="Liberation Sans" font-size="11" font-weight="700">1</text><text x="13" y="16" text-anchor="middle" font-family="Liberation Sans" font-size="11" font-weight="700">2</text></svg></button>
      <button class="up ib" aria-label="Report"><svg width="22" height="22"><path d="M.5.5h21v21H.5z" fill="none" stroke="#000"/><path d="M3.500 2.500h15v14l-3 3h-12z" fill="#ff0" stroke="#000"/><path d="M5 5.500h9M5 8.500h11M5 11.500h8M5 14.500h9" stroke="#000"/></svg></button>
      <button class="ib hot-i" aria-label="Histogram"><svg width="22" height="22" stroke="#000"><path d="M.5.5h21v21H.5z" fill="none"/><path d="M3.500 9.500h3v9h-3z" fill="#c22"/><path d="M6.500 6.500h3v12h-3z" fill="#2c2"/><path d="M9.500 12.500h3v6h-3z" fill="#22c"/><path d="M12.500 4.500h3v14h-3z" fill="#e2e"/><path d="M15.500 10.500h3v8h-3z" fill="#2dd"/><path d="M1 18.500h20"/></svg></button>
    </div>
  </div>
</section>

<svg class="note position-absolute top-0 start-0 pe-none" width="1920" height="1080"><path d="M987 235l610 220" stroke="#00ff00" stroke-width="5"/><path d="M1589 445l23 18-30 1z" fill="#00ff00"/></svg>
</body>
</html>
